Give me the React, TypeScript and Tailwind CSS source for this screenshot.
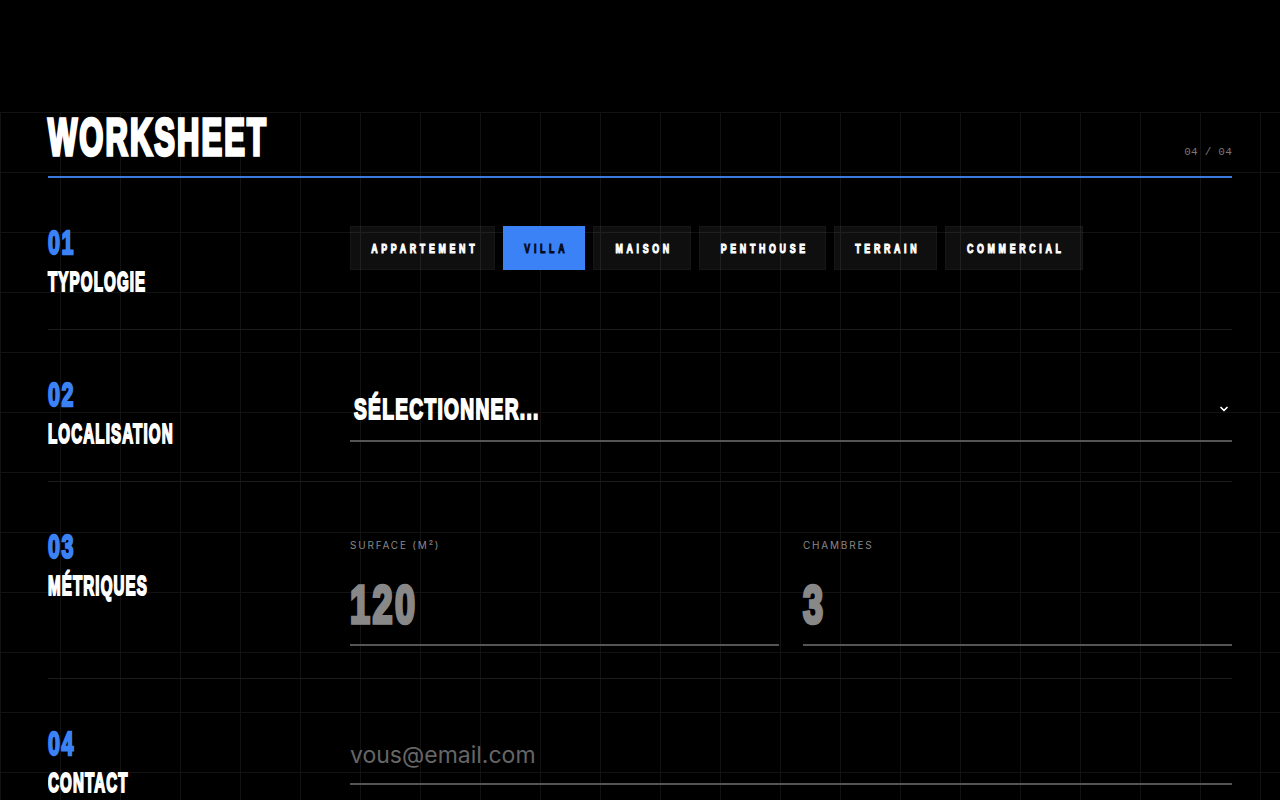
import React from "react";
import { ChevronDown } from "lucide-react";

const D = "font-['Liberation_Sans',Arial,sans-serif] font-bold leading-none";

function Cond({ children, className }: { children: React.ReactNode; className: string }) {
  return <span className={`inline-block whitespace-nowrap ${D} ${className}`}>{children}</span>;
}

const tabs = [
  { label: "APPARTEMENT", w: "w-[145px]" },
  { label: "VILLA", w: "w-[82px]", active: true },
  { label: "MAISON", w: "w-[98px]" },
  { label: "PENTHOUSE", w: "w-[127px]" },
  { label: "TERRAIN", w: "w-[103px]" },
  { label: "COMMERCIAL", w: "w-[138px]" },
];

function Label({ n, t }: { n: string; t: string }) {
  return (
    <div className="flex flex-col items-start pt-12">
      <Cond className="origin-left scale-x-[0.65] text-[33px] tracking-[2.3px] text-[#3b82f6] [-webkit-text-stroke-width:2.3px]">
        {n}
      </Cond>
      <Cond className="mt-[10px] origin-left scale-x-[0.56] text-[27px] tracking-[2px] text-white [-webkit-text-stroke-width:2px]">
        {t}
      </Cond>
    </div>
  );
}

export default function App() {
  return (
    <div className="min-h-screen w-full overflow-hidden bg-black">
      <div className="h-[112px]" />
      <div className="min-h-[688px] bg-[linear-gradient(to_right,#121212_1px,transparent_1px),linear-gradient(to_bottom,#121212_1px,transparent_1px)] bg-[size:60px_60px] px-12">
        <header className="flex h-[66px] items-end justify-between border-b-2 border-[#3b78e0]">
          <Cond className="mb-[13px] origin-left scale-x-[0.606] text-[51px] tracking-[3.5px] text-white [-webkit-text-stroke-width:3.5px]">
            WORKSHEET
          </Cond>
          <span className="mb-[18px] font-['Liberation_Mono',monospace] text-[11px] leading-none tracking-[0.02em] text-[#777]">
            04 / 04
          </span>
        </header>

        <div className="grid h-[152px] grid-cols-[302px_1fr] border-b border-[#1c1c1c]">
          <Label n="01" t="TYPOLOGIE" />
          <div className="flex items-start gap-2 pt-12">
            {tabs.map((t) => (
              <div
                key={t.label}
                className={`flex h-[44px] shrink-0 items-center justify-center ${t.w} ${
                  t.active ? "bg-[#3b82f6] text-[#050a18]" : "border border-white/[0.03] bg-white/[0.06] text-white"
                }`}
              >
                <Cond className="ml-[3.7px] scale-x-[0.68] text-[13px] tracking-[5.4px] [-webkit-text-stroke-width:1.1px]">
                  {t.label}
                </Cond>
              </div>
            ))}
          </div>
        </div>

        <div className="grid h-[152px] grid-cols-[302px_1fr] border-b border-[#1c1c1c]">
          <Label n="02" t="LOCALISATION" />
          <div className="pt-12">
            <div className="flex h-[64px] items-center justify-between border-b-2 border-[#555] pl-1 pr-[2px]">
              <Cond className="origin-left scale-x-[0.66] text-[29px] tracking-[2px] text-white [-webkit-text-stroke-width:2px]">
                SÉLECTIONNER...
              </Cond>
              <ChevronDown size={12} strokeWidth={3.5} className="text-white" />
            </div>
          </div>
        </div>

        <div className="grid h-[197px] grid-cols-[302px_1fr] border-b border-[#1c1c1c]">
          <Label n="03" t="MÉTRIQUES" />
          <div className="grid grid-cols-2 items-start gap-6 pt-[56px]">
            {[
              ["SURFACE (M²)", "120"],
              ["CHAMBRES", "3"],
            ].map(([l, v]) => (
              <div key={l} className="flex flex-col items-start border-b-2 border-[#555] pb-[13px]">
                <span className="font-['Inter',sans-serif] text-[10px] leading-[14px] tracking-[0.18em] text-[#888]">
                  {l}
                </span>
                <Cond className="mt-[26px] origin-left scale-x-[0.68] text-[53px] tracking-[3.7px] text-[#888] [-webkit-text-stroke-width:3.7px]">
                  {v}
                </Cond>
              </div>
            ))}
          </div>
        </div>

        <div className="grid h-[121px] grid-cols-[302px_1fr]">
          <Label n="04" t="CONTACT" />
          <div className="pt-12">
            <div className="flex h-[58px] items-center border-b-2 border-[#555]">
              <span className="font-['Inter',sans-serif] text-[23px] leading-none text-[#666]">vous@email.com</span>
            </div>
          </div>
        </div>
      </div>
    </div>
  );
}
